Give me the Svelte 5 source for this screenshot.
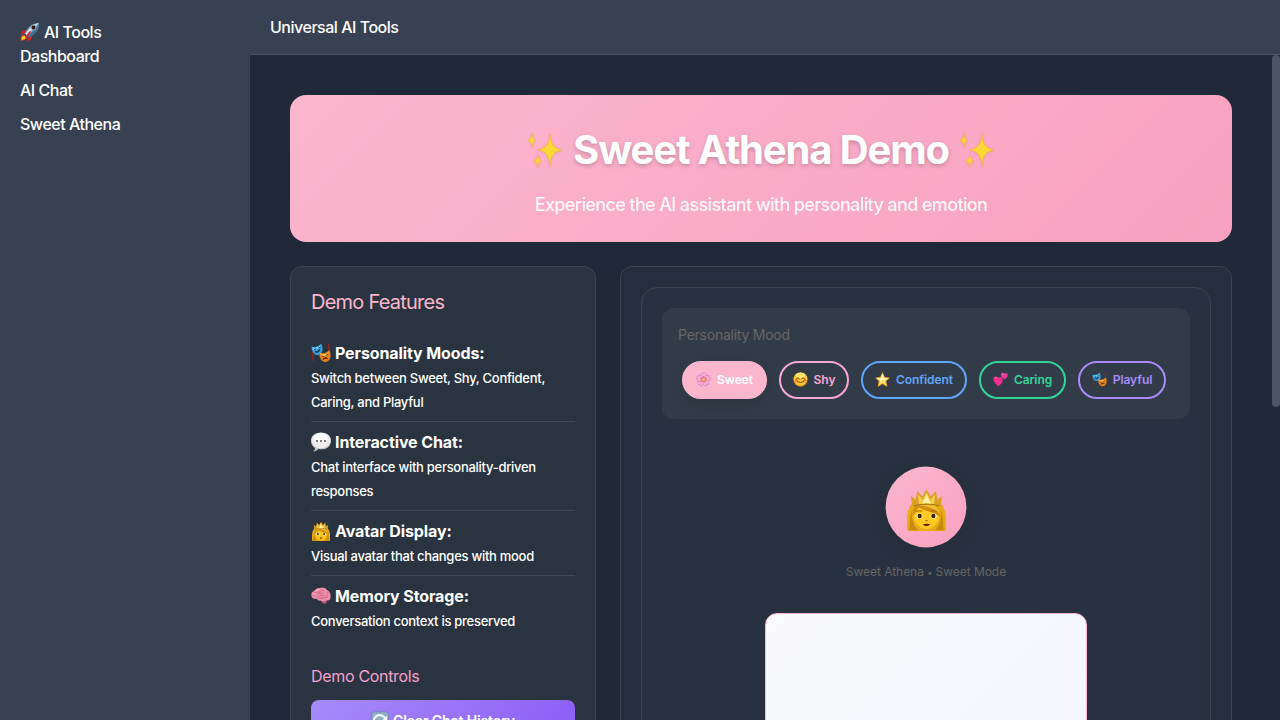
<script>
  const nav = ['Dashboard', 'AI Chat', 'Sweet Athena'];
  const features = [
    { icon: 'masks', title: 'Personality Moods:', lines: ['Switch between Sweet, Shy, Confident,', 'Caring, and Playful'] },
    { icon: 'speech', title: 'Interactive Chat:', lines: ['Chat interface with personality-driven', 'responses'] },
    { icon: 'princess', title: 'Avatar Display:', lines: ['Visual avatar that changes with mood'] },
    { icon: 'brain', title: 'Memory Storage:', lines: ['Conversation context is preserved'] }
  ];
  const moods = [
    { id: 'sweet', icon: 'flower', label: 'Sweet' },
    { id: 'shy', icon: 'smile', label: 'Shy' },
    { id: 'confident', icon: 'star', label: 'Confident' },
    { id: 'caring', icon: 'hearts', label: 'Caring' },
    { id: 'playful', icon: 'masks', label: 'Playful' }
  ];
  let mood = $state('sweet');
</script>

{#snippet emoji(name)}
  <svg class="emoji" viewBox="0 0 40 40" aria-hidden="true">
    {#if name === 'rocket'}
      <path d="M13 16 4 18 1 25l9-2z" fill="#c9222b" />
      <path d="M23 26 22 35l-7 4 2-10z" fill="#d8262b" />
      <path d="m8 25-6 2-1 11 11-3 4-6z" fill="#f23a18" />
      <path d="m9 27-5 3-1 6 7-2 3-4z" fill="#ffd52b" />
      <path d="M38 2C25 2 17 9 9 23l8 8C31 24 38 15 38 2Z" fill="#75a5c5" />
      <path d="M38 2C28 4 18 12 11 24l3 3C23 17 30 9 38 2Z" fill="#d3e1e8" />
      <path d="M38 2c0 13-8 22-21 29l-3-3C25 21 33 13 38 2Z" fill="#416e91" />
      <circle cx="27" cy="11" r="5.4" fill="#a3adb2" />
      <circle cx="27" cy="11" r="3.8" fill="#36181c" />
      <path d="m9 23 8 8-3 1-6-6z" fill="#394d61" />
      <path d="m20 20-8 11" stroke="#d7282c" stroke-width="3.5" stroke-linecap="round" />
    {:else if name === 'sparkles'}
      <g fill="#fdd835" stroke="#f2ad48" stroke-width=".8">
        <path d="M25.500 1.500c1.200 12 3.600 16.200 13.500 18.500-9.900 2.300-12.300 6.500-13.500 18.500-1.200-12-3.600-16.200-13.500-18.500 9.900-2.300 12.300-6.500 13.500-18.500Z" />
        <path d="M5.500 1c.7 5.300 1.500 6.800 4.500 8.200-3 1.400-3.800 2.900-4.500 8.200-.7-5.300-1.500-6.800-4.500-8.200 3-1.400 3.800-2.900 4.500-8.200Z" />
        <path d="M12 24.500c.7 4.800 1.500 6.100 4.500 7.500-3 1.400-3.800 2.700-4.500 7.500-.7-4.800-1.500-6.100-4.500-7.500 3-1.400 3.800-2.700 4.500-7.500Z" />
      </g>
    {:else if name === 'masks'}
      <path d="M3 14c3 8-1 13 2 21M35 3c4 6-2 11 2 18" fill="none" stroke="#a81b18" stroke-width="3" stroke-linecap="round" />
      <path d="M1 7c7 2 14 0 20-6 3 10 4 19-5 23C7 26 1 17 1 7Z" fill="#2f9de0" />
      <path d="M3 9c7 1 13-1 17-5-2 6-8 10-16 10Z" fill="#7bd0f5" />
      <path d="m6 13 5-1M15 10l4-2M8 17c4 1 7-1 9-4 0 5-5 8-9 4Z" stroke="#14334c" stroke-width="1.800" fill="#14334c" />
      <path d="M17 19c7 3 15 1 20-5 4 10 3 22-7 24-9 1-14-8-13-19Z" fill="#e5811c" />
      <path d="M19 21c7 2 13 1 17-4-2 8-8 11-16 9Z" fill="#ffc24d" />
      <path d="m21 26 5 1M30 25l4-3M24 33c1-4 6-5 9-2-4-1-6 0-9 2Z" stroke="#602810" stroke-width="1.800" fill="#602810" />
    {:else if name === 'speech'}
      <path d="M20 1C7 1 0 8 0 18c0 6 3 11 8 14 0 3-1 5-4 7 5 0 8-2 11-5 15 3 25-5 25-16C40 8 33 1 20 1Z" fill="#c5c5c5" />
      <ellipse cx="20" cy="17" rx="19" ry="15.500" fill="#eeeeee" />
      <ellipse cx="20" cy="11" rx="14" ry="8" fill="#fff" />
      <g fill="#414141"><circle cx="12" cy="18" r="1.800" /><circle cx="20" cy="18" r="1.800" /><circle cx="28" cy="18" r="1.800" /></g>
    {:else if name === 'princess'}
      <path d="M7 14h26c4 5 5 10 5 15v9q0 2-2 2H4q-2 0-2-2v-9c0-5 1-10 5-15Z" fill="#e9ab16" />
      <path d="M7 20c-3 7-2 13-3 19h8c-5-5-6-12-5-19Zm26 0c3 7 2 13 3 19h-8c5-5 6-12 5-19Z" fill="#c98a0c" />
      <path d="M8 22c0-5 5-7 12-7s12 2 12 7c1 9-5 16-12 16S7 31 8 22Z" fill="#ffc91f" />
      <path d="M7 26c3-2 4-6 6-8 6 4 14 4 20 9-1-5-2-10-5-12H11c-3 3-4 7-4 11Z" fill="#d18e10" />
      <path d="M14 16c7 1 14 3 19 9-2-5-4-8-6-10H14Z" fill="#f3be2c" />
      <path d="M7 17 5.500 7.500 10 11l1.500-8 4.500 5 4-6.500 4 6.500 4.500-5 1.500 8 4.500-3.500L33 17c-7-1.500-19-1.500-26 0Z" fill="#dca020" />
      <path d="m13 15-1-9 4.500 5L20 4l3.500 7L28 6l-1 9c-4-1-10-1-14 0Z" fill="#f6cd52" />
      <path d="m16 15 4-9 4 9c-3-1-5-1-8 0Z" fill="#fff2a5" />
      <path d="M8 16.500c7-1.500 17-1.500 24 0" fill="none" stroke="#aa761b" stroke-width="1" />
      <ellipse cx="13.500" cy="26" rx="2.800" ry="2.400" fill="#fff" /><ellipse cx="26.500" cy="26" rx="2.800" ry="2.400" fill="#fff" />
      <circle cx="13.700" cy="26" r="2" fill="#42230c" /><circle cx="26.300" cy="26" r="2" fill="#42230c" />
      <path d="M11 22q2-1.500 5-.5m8 0q3-1 5 .5M19 30q1 1 2 0" fill="none" stroke="#a86d0d" stroke-width="1" />
      <path d="M16.500 33.500q3.500-.8 7 0-3.500 3.500-7 0Z" fill="#651b12" />
    {:else if name === 'brain'}
      <path d="M23 28c4-2 9-1 9 2l-2 5h-6c-2-2-3-4-1-7Z" fill="#bf5872" />
      <path d="M6 10C10 5 13 4 18 4c5-3 11 0 14 4 5 2 8 8 7 13 1 6-4 9-9 8-4 3-8 2-12 0-3 1-6-1-6-3C4 27-1 22 1 17c-1-4 2-6 5-7Z" fill="#ee8ba8" />
      <path d="M6 14c5-3 8 1 11-3m2-5c1 3 5 1 6 4m2-1c5-1 8 4 6 7M3 20c5-2 7-3 10 0m-2-4c5-2 9 0 13-2m-9 7c5-4 10 1 14-4m-8 8c5-3 8 0 12-4M9 24c5 2 10-2 14 1m-2-15c-3 0-4 1-4 4m17 4c-2 1-3 3-3 5" fill="none" stroke="#c45c7f" stroke-width="1.300" />
      <path d="M9 11c3-3 6-4 9-4m8 0c4 1 6 3 7 5M5 17c2-1 4-1 6-1" fill="none" stroke="#ffbdcb" stroke-width="1.800" />
    {:else if name === 'flower'}
      <g fill="#f9a9d2" stroke="#cc70a8" stroke-width="1.200">
        {#each [0, 72, 144, 216, 288] as r}
          <path d="M20 20C9 12 11 3 17 1l3 3 3-3c6 2 8 11-3 19Z" transform="rotate({r} 20 20)" />
        {/each}
      </g>
      <g stroke="#cb3a7e" stroke-width="1.300">
        {#each [0, 72, 144, 216, 288] as r}<path d="M20 18V11M20 18l-3-4M20 18l3-4" transform="rotate({r} 20 20)" />{/each}
      </g>
      <circle cx="20" cy="20" r="4" fill="#fbcf35" />
    {:else if name === 'smile'}
      <circle cx="20" cy="20" r="19" fill="#efa018" /><ellipse cx="20" cy="18" rx="18" ry="17" fill="#fdc735" /><ellipse cx="20" cy="9" rx="13" ry="7" fill="#ffe268" />
      <circle cx="8" cy="23" r="5" fill="#f36c35" opacity=".6" /><circle cx="32" cy="23" r="5" fill="#f36c35" opacity=".6" />
      <path d="M9 18q4-6 8 0M23 18q4-6 8 0M11 24q9 9 18 0" fill="none" stroke="#60310d" stroke-width="2.300" stroke-linecap="round" />
    {:else if name === 'star'}
      <path d="m20 0 6 13 14 2-10 9 3 16-13-8-13 8 3-16L0 15l14-2Z" fill="#f2a51c" />
      <path d="m20 3 5 12 12 1-10 8 3 12-10-7-10 7 3-12-10-8 12-1Z" fill="#ffe16b" />
      <path d="m20 5 4 11 10 2-9 5-5-3-5 3-9-5 10-2Z" fill="#fff5ba" />
    {:else if name === 'hearts'}
      <path d="M14 38C6 31 0 24 1 18c1-7 10-8 13-2 4-6 12-2 12 5 0 7-6 13-12 17Z" fill="#f52c91" />
      <path d="M31 20C25 15 20 12 21 6c1-5 7-6 9-1 3-4 9-2 9 3 0 5-4 9-8 12Z" fill="#f23b99" />
      <path d="M4 18c1-4 5-4 7-2M24 6c1-2 3-2 4 0" fill="none" stroke="#ff83c1" stroke-width="2" />
    {:else if name === 'refresh'}
      <rect x="1" y="1" width="38" height="38" rx="6" fill="#668da8" /><rect x="2.500" y="3" width="35" height="33" rx="4" fill="#8fb0c4" />
      <path d="M31 16A13 13 0 1 0 31 28" fill="none" stroke="#fff" stroke-width="4.500" /><path d="M36 10v12H24Z" fill="#fff" />
    {/if}
  </svg>
{/snippet}

<div class="app">
  <aside>
    <div class="brand">{@render emoji('rocket')}<span>AI Tools</span></div>
    <nav>{#each nav as item}<a href="#/">{item}</a>{/each}</nav>
  </aside>
  <main>
    <header><span>Universal AI Tools</span></header>
    <div class="scroller">
      <div class="content">
        <section class="hero">
          <h1>{@render emoji('sparkles')}<span>Sweet Athena Demo</span>{@render emoji('sparkles')}</h1>
          <p>Experience the AI assistant with personality and emotion</p>
        </section>
        <div class="columns">
          <section class="features">
            <h2>Demo Features</h2>
            <ul>
              {#each features as f}
                <li>
                  <strong>{@render emoji(f.icon)}<span>{f.title}</span></strong>
                  <div class="detail">{#each f.lines as line}<small>{line}</small>{/each}</div>
                </li>
              {/each}
            </ul>
            <h3>Demo Controls</h3>
            <button class="clear">{@render emoji('refresh')}<span>Clear Chat History</span></button>
          </section>
          <section class="stage">
            <div class="athena">
              <div class="picker">
                <div class="label">Personality Mood</div>
                <div class="moods">
                  {#each moods as m}
                    <button class="mood {m.id}" class:active={mood === m.id} onclick={() => (mood = m.id)}>
                      {@render emoji(m.icon)}<span>{m.label}</span>
                    </button>
                  {/each}
                </div>
              </div>
              <div class="avatar">{@render emoji('princess')}</div>
              <div class="caption">Sweet Athena <b>•</b> Sweet Mode</div>
              <div class="chat"></div>
            </div>
          </section>
        </div>
      </div>
      <div class="track"><div class="thumb"></div></div>
    </div>
  </main>
</div>

<style>
  :global(body) { margin: 0; overflow: hidden; background: #1f2937; }
  * { box-sizing: border-box; }
  .app { display: flex; width: 1280px; height: 720px; overflow: hidden; color: #fff; font: 450 16px/24px Inter, sans-serif; letter-spacing: -0.48px; background: #1f2937; }
  .emoji { display: block; flex: none; width: 20px; height: 20px; }
  span, small, a { white-space: nowrap; }
  aside { flex: none; width: 250px; padding: 20px; background: #374151; }
  .brand { display: flex; align-items: center; gap: 4px; height: 24px; }
  nav { display: flex; flex-direction: column; gap: 10px; }
  a { color: #fff; text-decoration: none; }
  main { flex: 1; display: flex; flex-direction: column; min-width: 0; }
  header { flex: none; display: flex; align-items: center; height: 55px; padding: 0 20px; background: #374151; border-bottom: 1px solid #4b5563; }
  .scroller { flex: 1; display: flex; min-height: 0; }
  .content { flex: 1; padding: 40px 40px 0; overflow: hidden; }
  .track { flex: none; width: 8px; }
  .thumb { height: 352px; background: #4b5563; border-radius: 4px; }
  .hero { height: 147px; padding: 31px 0 0; text-align: center; border-radius: 16px; background: linear-gradient(135deg, #fbb6ce, #f8a1c0); }
  h1 { display: flex; justify-content: center; align-items: center; gap: 10px; height: 48px; margin: 0 0 17px; font-size: 40px; line-height: 48px; font-weight: 750; letter-spacing: -1.13px; text-shadow: 0 2px 4px rgba(0, 0, 0, .2); }
  h1 .emoji { width: 36px; height: 36px; filter: drop-shadow(0 1px 1px rgba(0, 0, 0, .06)); }
  .hero p { margin: 0; font-size: 18px; line-height: 27px; letter-spacing: -.62px; opacity: .9; }
  .columns { display: grid; grid-template-columns: 1fr 2fr; gap: 24px; margin-top: 24px; }
  .features, .stage { height: 700px; border: 1px solid #3b4552; border-radius: 12px; padding: 20px; }
  .features { background: #2a3440; }
  .stage { background: #242e3c; }
  h2 { margin: 0 0 16px; font-size: 20px; line-height: 30px; font-weight: 400; letter-spacing: -.76px; color: #fbb6ce; }
  ul { list-style: none; margin: 0; padding: 0; }
  li { padding: 8px 0; border-bottom: 1px solid #404a56; }
  li:last-child { border: 0; }
  strong { display: flex; align-items: center; gap: 4px; height: 24px; font-weight: 750; letter-spacing: -.11px; }
  .detail { padding-top: 1px; margin-bottom: -1px; }
  small { display: block; font-size: 13px; line-height: 24px; letter-spacing: -.28px; }
  h3 { margin: 24px 0 12px; font-size: 16px; line-height: 24px; font-weight: 400; letter-spacing: -.32px; color: #f5a0cc; }
  button { font-family: inherit; }
  .clear { display: flex; width: 100%; height: 40px; align-items: center; justify-content: center; gap: 4px; border: 0; border-radius: 8px; color: #fff; font-size: 14px; font-weight: 600; letter-spacing: -.12px; background: linear-gradient(135deg, #a78bfa, #8b5cf6); }
  .clear .emoji { width: 18px; height: 18px; }
  .athena { display: flex; flex-direction: column; align-items: center; height: 656px; padding: 20px; border: 1px solid #3b4552; border-radius: 16px; background: #28313f; }
  .picker { width: 100%; height: 111px; padding: 16px; border-radius: 12px; background: #323c48; }
  .label { font-size: 14px; line-height: 21px; font-weight: 420; letter-spacing: -.24px; color: #666; }
  .moods { display: flex; gap: 12px; padding: 0 4px; margin-top: 16px; }
  .mood { display: flex; align-items: center; justify-content: center; gap: 6px; height: 38px; padding: 0 0 1px; border: 2px solid; border-radius: 20px; font-size: 12px; font-weight: 600; letter-spacing: -.06px; background: transparent; }
  .mood .emoji { width: 15px; height: 15px; }
  .sweet { width: 85px; color: #fbb6ce; }
  .shy { width: 70px; color: #f9a8d4; }
  .confident { width: 106px; color: #60a5fa; }
  .caring { width: 87px; color: #34d399; }
  .playful { width: 88px; color: #a78bfa; }
  .sweet.active { color: #fff; border-color: #fbb6ce; background: #fbb6ce; box-shadow: 0 4px 12px rgba(0, 0, 0, .15); }
  .avatar { display: flex; align-items: center; justify-content: center; width: 80px; height: 80px; margin-top: 48px; padding-top: 5px; border-radius: 50%; background: linear-gradient(135deg, #fbb6ce, #f8a1c0); box-shadow: 0 4px 20px rgba(0, 0, 0, .1); transform: scale(1.01); }
  .avatar .emoji { width: 43px; height: 43px; }
  .caption { height: 18px; margin-top: 16px; font-size: 12px; line-height: 18px; font-weight: 420; letter-spacing: -.04px; color: #666; }
  .caption b { font-size: 9px; line-height: 1; font-weight: 400; }
  .chat { width: 322px; height: 300px; margin-top: 32px; border: 1px solid #fbb6ce; border-radius: 12px; background: linear-gradient(135deg, #fafafc, #f6f8fc 30%, #f0f5f9); }
</style>
